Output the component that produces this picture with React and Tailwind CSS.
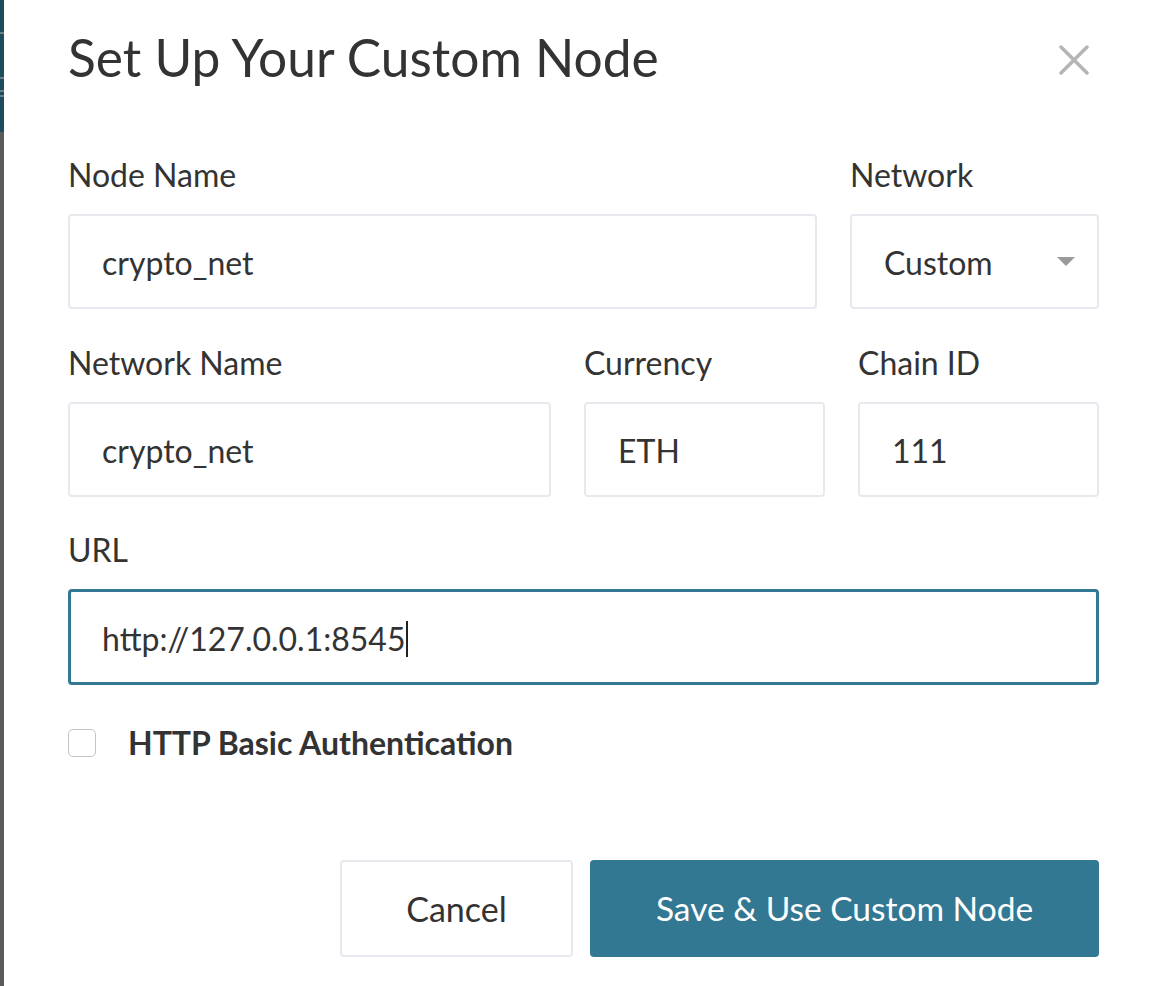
import React from 'react';

const Field = ({ label, value, children }) => (
  <div className="flex flex-col min-w-0">
    <label className="text-[32px] leading-[36px] text-[#333]">{label}</label>
    <div className="mt-[21px] h-[95px] rounded-[4px] border-2 border-[#e6e9ed] bg-white flex items-center pt-[3px] pl-[32px] pr-[20px] text-[32px] text-[#333]">
      {children || value}
    </div>
  </div>
);

const App = () => {
  return (
    <div
      className="w-[1164px] h-[986px] flex bg-white overflow-hidden"
      style={{ fontFamily: 'Lato, "Open Sans", sans-serif' }}
    >
      {/* edge of the page behind the modal */}
      <div className="w-[4px] flex flex-col">
        <div className="h-[132px] bg-[#1f4b5f] flex flex-col">
          <div className="h-[32px]" />
          <div className="h-[2px] bg-[#6b7f88]" />
          <div className="h-[43px]" />
          <div className="h-[2px] bg-[#6b7f88]" />
          <div className="h-[11px]" />
          <div className="h-[2px] bg-[#6b7f88]" />
          <div className="h-[3px]" />
          <div className="h-[2px] bg-[#6b7f88]" />
        </div>
        <div className="flex-1 bg-[#5b5b5b]" />
      </div>

      <div className="flex-1 pl-[64px] pr-[65px] pt-[26px]">
        <div className="flex items-start justify-between">
          <h2 className="text-[51.5px] leading-[62px] text-[#333]">Set Up Your Custom Node</h2>
          <button className="mt-[19px] mr-[10px] w-[30px] h-[30px] text-[#b5b5b5]">
            <svg viewBox="0 0 30 30" width="30" height="30" stroke="currentColor" strokeWidth="3.5" strokeLinecap="round">
              <path d="M2 2 L28 28 M28 2 L2 28" />
            </svg>
          </button>
        </div>

        <div className="mt-[69px] grid grid-cols-[1fr_249px] gap-x-[33px]">
          <Field label="Node Name" value="crypto_net" />
          <Field label="Network">
            <div className="flex-1 flex items-center justify-between">
              <span>Custom</span>
              <svg width="18" height="9" viewBox="0 0 18 9" className="mr-[2px] -mt-[3px]">
                <path d="M0 0 L18 0 L9 9 Z" fill="#9a9a9a" />
              </svg>
            </div>
          </Field>
        </div>

        <div className="mt-[36px] grid grid-cols-[1fr_241px_241px] gap-x-[33px]">
          <Field label="Network Name" value="crypto_net" />
          <Field label="Currency" value="ETH" />
          <Field label="Chain ID" value="111" />
        </div>

        <div className="mt-[35px] flex flex-col">
          <label className="text-[32px] leading-[36px] text-[#333]">URL</label>
          <div className="mt-[21px] h-[96px] rounded-[4px] border-[3px] border-[#337893] bg-white flex items-center pt-[3px] pl-[31px] text-[32px] text-[#333]">
            <span>http://127.0.0.1:8545</span>
            <span className="w-[2px] h-[36px] bg-[#222] ml-[1px]" />
          </div>
        </div>

        <div className="mt-[40px] flex items-center">
          <span className="w-[28px] h-[28px] rounded-[5px] border-[1.5px] border-[#c4c4c4] bg-white" />
          <span className="ml-[32px] text-[32px] font-bold text-[#333] leading-[36px]">
            HTTP Basic Authentication
          </span>
        </div>

        <div className="mt-[99px] flex justify-end gap-[17px]">
          <button className="w-[233px] h-[97px] rounded-[4px] border-2 border-[#e6e9ed] bg-white text-[34px] text-[#333]">
            Cancel
          </button>
          <button className="w-[509px] h-[97px] rounded-[4px] bg-[#337893] text-[33.5px] text-white">
            Save &amp; Use Custom Node
          </button>
        </div>
      </div>
    </div>
  );
};

export default App;
